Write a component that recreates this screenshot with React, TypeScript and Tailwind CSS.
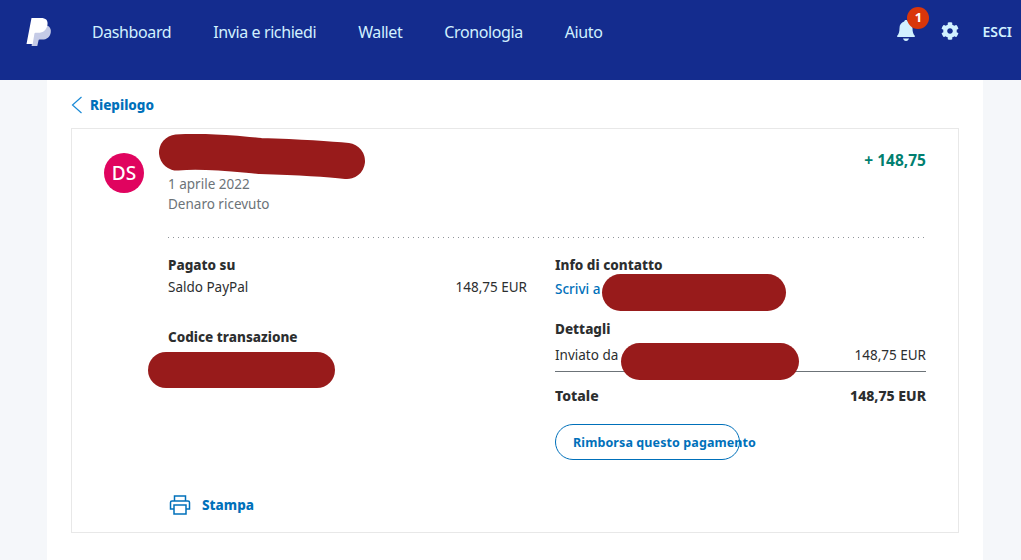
import { FaCog } from "react-icons/fa";

const navLinks = ["Dashboard", "Invia e richiedi", "Wallet", "Cronologia", "Aiuto"];

function Logo() {
  return (
    <svg width="26" height="30" viewBox="0 0 26 30" className="shrink-0">
      <path d="M8 8h9.500c4.800 0 8 2.600 7.300 7.200-.7 4.800-4 7.400-8.600 7.400h-2.600c-.6 0-1 .4-1.100 1L11.300 29H5.600z" fill="#c5cbe6" />
      <path d="M5.500 1h9.600c4.400 0 7 2.200 6.400 6.400-.7 5.400-4.400 8.400-9.300 8.400H9.500c-.6 0-1 .4-1.100 1l-1.700 10.200H.5z" fill="#ffffff" />
    </svg>
  );
}

function Bell() {
  return (
    <svg width="18" height="22" viewBox="0 0 18 22" fill="#d1f1ff">
      <path d="M9 0c1 0 1.700.7 1.800 1.600C13.800 2.400 15.500 5 15.500 8.200c0 3.600.8 6 2.300 7.500.3.400.2 1.300-.6 1.300H.8c-.8 0-.9-.9-.6-1.300C1.700 14.200 2.500 11.800 2.500 8.200 2.500 5 4.200 2.400 7.200 1.600 7.300.7 8 0 9 0z" />
      <path d="M6 18.500h6c0 .3-.8 2.500-3 2.500s-3-2.200-3-2.500z" />
    </svg>
  );
}

function Printer() {
  return (
    <svg width="22" height="20" viewBox="0 0 22 20" fill="none" stroke="#0070ba" strokeWidth="1.500">
      <path d="M5.500 6V1h11v5" />
      <path d="M5 14H1.500V7.500c0-.8.700-1.500 1.500-1.500h16c.8 0 1.500.7 1.500 1.500V14H17" />
      <path d="M5 10h12v9H5z" />
    </svg>
  );
}

export default function App() {
  return (
    <div className="h-[560px] overflow-hidden bg-[#f5f7fa] font-['Noto_Sans',sans-serif] text-[13.5px] text-[#2c2e2f]">
      <header className="flex h-20 items-start bg-[#142c8e] pl-[26px] pr-[9px] text-[#d1f1ff]">
        <div className="mt-[17px]">
          <Logo />
        </div>
        <nav className="ml-10 mt-[20px] flex gap-[42px] text-[16px] leading-6">
          {navLinks.map((label) => (
            <a key={label} className="tracking-[-0.4px]">
              {label}
            </a>
          ))}
        </nav>
        <div className="ml-auto flex items-start">
          <div className="relative mt-5">
            <Bell />
            <span className="absolute -top-[13px] left-[10px] flex h-[22px] w-[22px] items-center justify-center rounded-full bg-[#d9360b] text-[13px] font-bold text-white">
              1
            </span>
          </div>
          <FaCog className="ml-[26px] mt-[22px] text-[18px]" />
          <a className="ml-[23px] mt-[22px] text-[14px] font-semibold leading-5">ESCI</a>
        </div>
      </header>

      <main className="ml-[47px] mr-[38px] h-[480px] bg-white px-6 pt-[14px]">
        <a className="flex h-[22px] items-center gap-[7px] text-[#0070ba]">
          <svg width="12" height="18" viewBox="0 0 12 18" fill="none" stroke="#1a8ad6" strokeWidth="1.200">
            <path d="M10.500 1 1.500 9l9 8" />
          </svg>
          <span className="font-extrabold">Riepilogo</span>
        </a>

        <section className="mt-[12px] h-[405px] border border-[#e8e8e8] px-8">
          <div className="flex items-start">
            <div className="mt-6 flex h-10 w-10 shrink-0 items-center justify-center rounded-full bg-[#e0045f] text-[19px] font-medium text-white">
              DS
            </div>
            <div className="ml-6 flex-1">
              <div className="relative h-[45px]">
                <svg width="212" height="48" viewBox="0 0 212 48" className="absolute -left-[11px] top-[5px]">
                  <path
                    d="M20 18.500C50 16 80 20 103 22c30 1 60 2 87 5"
                    fill="none"
                    stroke="#981b1b"
                    strokeWidth="36"
                    strokeLinecap="round"
                  />
                </svg>
              </div>
              <p className="leading-5 text-[#6c7378]">1 aprile 2022</p>
              <p className="leading-5 text-[#6c7378]">Denaro ricevuto</p>
            </div>
            <p className="mt-[21px] text-[15.500px] font-bold leading-5 text-[#017f70]">+ 148,75</p>
          </div>

          <div className="ml-[64px] mt-[23px] h-px bg-[repeating-linear-gradient(to_right,#8f9499_0,#8f9499_1px,transparent_1px,transparent_5px)]" />

          <div className="ml-[64px] mt-[17px] flex gap-7">
            <div className="w-[359px]">
              <h3 className="font-extrabold leading-5">Pagato su</h3>
              <div className="mt-[2px] flex justify-between leading-5">
                <span>Saldo PayPal</span>
                <span>148,75 EUR</span>
              </div>
              <h3 className="mt-[30px] font-extrabold leading-5">Codice transazione</h3>
              <div className="relative h-[36px]">
                <span className="absolute -left-5 top-[5px] h-[36px] w-[187px] rounded-full bg-[#981b1b]" />
              </div>
            </div>

            <div className="flex-1">
              <h3 className="font-extrabold leading-5">Info di contatto</h3>
              <div className="relative mt-[4px] font-medium leading-5 text-[#0070ba]">
                Scrivi a
                <span className="absolute left-[47px] -top-[5px] h-[37px] w-[184px] rounded-full bg-[#981b1b]" />
              </div>
              <h3 className="mt-[20px] font-extrabold leading-5">Dettagli</h3>
              <div className="relative mt-[6px] flex justify-between pb-[6px] leading-5">
                <span>Inviato da</span>
                <span>148,75 EUR</span>
                <span className="absolute left-[66px] -top-[2px] h-[37px] w-[178px] rounded-full bg-[#981b1b]" />
              </div>
              <div className="border-t border-[#6c7378]" />
              <div className="mt-[14px] flex justify-between text-[14px] font-extrabold leading-5">
                <span>Totale</span>
                <span>148,75 EUR</span>
              </div>
              <a className="mt-[18px] flex h-9 w-[185px] items-center whitespace-nowrap rounded-full border border-[#0070ba] pl-[17px] pt-[2px] text-[12.500px] font-bold tracking-[0.1px] text-[#0070ba]">
                Rimborsa questo pagamento
              </a>
            </div>
          </div>

          <a className="ml-[65px] mt-[35px] flex items-center gap-[11px] font-extrabold text-[#0070ba]">
            <Printer />
            Stampa
          </a>
        </section>
      </main>
    </div>
  );
}
